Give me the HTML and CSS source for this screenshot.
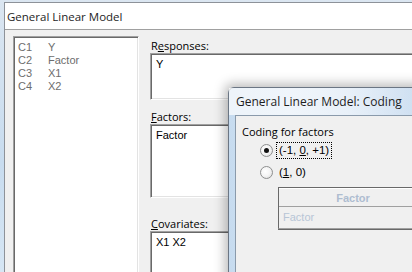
FILE: index.html
```html
<!DOCTYPE html>
<html lang="en">
<head>
    <meta charset="UTF-8">
    <title>General Linear Model</title>
    <link rel="stylesheet" href="styles.css">
</head>
<body>
    <div class="window">
        <div class="titlebar">General Linear Model</div>
        <div class="content">
            <div class="varlist">
                <div class="var"><span class="col">C1</span><span>Y</span></div>
                <div class="var"><span class="col">C2</span><span>Factor</span></div>
                <div class="var"><span class="col">C3</span><span>X1</span></div>
                <div class="var"><span class="col">C4</span><span>X2</span></div>
            </div>
            <div class="fields">
                <label class="field-label">R<u>e</u>sponses:</label>
                <div class="field responses">Y</div>
                <label class="field-label"><u>F</u>actors:</label>
                <div class="field factors">Factor</div>
                <label class="field-label"><u>C</u>ovariates:</label>
                <div class="field covariates">X1 X2</div>
            </div>
        </div>
    </div>

    <div class="dialog">
        <div class="dialog-title">General Linear Model: Coding</div>
        <div class="dialog-body">
            <div class="group-label">Coding for factors</div>
            <div class="radio-row">
                <span class="radio checked"></span>
                <span class="radio-text focused">(-1, <u>0</u>, +1)</span>
            </div>
            <div class="radio-row">
                <span class="radio"></span>
                <span class="radio-text">(<u>1</u>, 0)</span>
            </div>
            <div class="grid">
                <div class="grid-head">Factor</div>
                <div class="grid-row">Factor</div>
            </div>
        </div>
    </div>
</body>
</html>
```

FILE: styles.css
```css
* {
    box-sizing: border-box;
    margin: 0;
    padding: 0;
}
body {
    width: 412px;
    height: 272px;
    overflow: hidden;
    position: relative;
    background: linear-gradient(180deg, #dbe6f1 0%, #c8dcef 60%, #d6e6f4 100%);
    font-family: 'Open Sans', 'Noto Sans', sans-serif;
    font-size: 11px;
    color: #000;
    padding: 2px 0 0 4px;
}
u {
    text-decoration: underline;
    text-underline-offset: 1px;
}

/* main window */
.window {
    width: 430px;
    height: 300px;
    border-top: 1px solid #8d9299;
    border-left: 1px solid #8d9299;
    background: #f0f0f0;
}
.titlebar {
    height: 27px;
    background: #fff;
    border-bottom: 1px solid #a0a0a0;
    padding-left: 2px;
    font-size: 11.5px;
    line-height: 27px;
    color: #1e1e1e;
}
.content {
    display: flex;
    gap: 11px;
    padding: 6px 0 0 8px;
}
.varlist {
    width: 126px;
    height: 260px;
    background: #fff;
    border-top: 1px solid #a0a0a0;
    border-left: 1px solid #a0a0a0;
    border-right: 1px solid #fff;
    box-shadow: inset 1px 1px 0 #696969, inset -1px 0 0 #e3e3e3;
    padding: 4px 0 0 4px;
    font-family: 'Liberation Sans', Arial, sans-serif;
    color: #6d6d6d;
}
.var {
    display: flex;
    height: 13px;
    line-height: 13px;
}
.col {
    width: 30px;
}
.fields {
    display: flex;
    flex-direction: column;
    width: 280px;
}
.field-label {
    display: block;
    height: 14px;
    line-height: 14px;
    padding-left: 1px;
    margin-top: 3px;
}
.field {
    background: #fff;
    border-top: 1px solid #a0a0a0;
    border-left: 1px solid #a0a0a0;
    border-bottom: 1px solid #fff;
    box-shadow: inset 1px 1px 0 #696969, inset 0 -1px 0 #e3e3e3;
    padding: 4px 0 0 5px;
    line-height: 13px;
    font-family: 'Liberation Sans', Arial, sans-serif;
}
.responses {
    height: 47px;
}
.factors {
    height: 74px;
}
.responses + .field-label {
    margin-top: 10px;
}
.factors + .field-label {
    margin-top: 19px;
}
.covariates {
    height: 60px;
}

/* coding dialog overlays the main window */
.dialog {
    position: absolute;
    left: 228px;
    top: 87px;
    width: 200px;
    height: 200px;
    border: 1px solid #6b7684;
    border-radius: 6px 0 0 0;
    background: linear-gradient(90deg, #c6dbef 0%, #d9e7f5 30%, #c9dcf0 100%);
    box-shadow: -3px -3px 12px rgba(0, 0, 0, 0.28);
    padding: 0 0 0 6px;
}
.dialog-title {
    height: 27px;
    line-height: 28px;
    font-size: 12px;
    color: #1e1e1e;
    background: linear-gradient(90deg, rgba(255,255,255,0.7) 0%, rgba(255,255,255,0.5) 60%, rgba(255,255,255,0) 100%);
    margin-left: -6px;
    padding-left: 7px;
}
.dialog-body {
    height: 170px;
    background: #f0f0f0;
    border-top: 1px solid #8a9aab;
    border-left: 1px solid #8a9aab;
    padding: 8px 0 0 6px;
}
.group-label {
    height: 15px;
    line-height: 15px;
}
.radio-row {
    display: flex;
    align-items: center;
    height: 22px;
    padding-left: 18px;
    gap: 3px;
    font-family: 'Liberation Sans', Arial, sans-serif;
}
.radio {
    width: 13px;
    height: 13px;
    border-radius: 50%;
    border: 1px solid #8e8f8f;
    background: radial-gradient(circle at 40% 40%, #fff 0%, #f4f4f4 50%, #d4d4d4 100%);
    position: relative;
}
.radio.checked::after {
    content: "";
    position: absolute;
    left: 3px;
    top: 3px;
    width: 5px;
    height: 5px;
    border-radius: 50%;
    background: #111;
}
.radio-text {
    padding: 1px 2px;
    line-height: 13px;
    font-size: 11.5px;
    border: 1px solid transparent;
}
.radio-text.focused {
    border: 1px dotted #000;
}
.grid {
    margin: 4px 0 0 36px;
    width: 200px;
    border-top: 1px solid #696969;
    border-left: 1px solid #696969;
    border-bottom: 1px solid #a0a0a0;
    box-shadow: 0 1px 0 #696969;
    font-family: 'Liberation Sans', Arial, sans-serif;
    color: #b7c5d6;
}
.grid-head {
    width: 150px;
    height: 18px;
    line-height: 18px;
    text-align: center;
    font-weight: bold;
    color: #aebdd0;
    border-top: 1px solid #fff;
    padding-right: 2px;
}
.grid-row {
    height: 22px;
    line-height: 20px;
    padding-left: 4px;
    border-top: 1px solid #a0a0a0;
}
```
